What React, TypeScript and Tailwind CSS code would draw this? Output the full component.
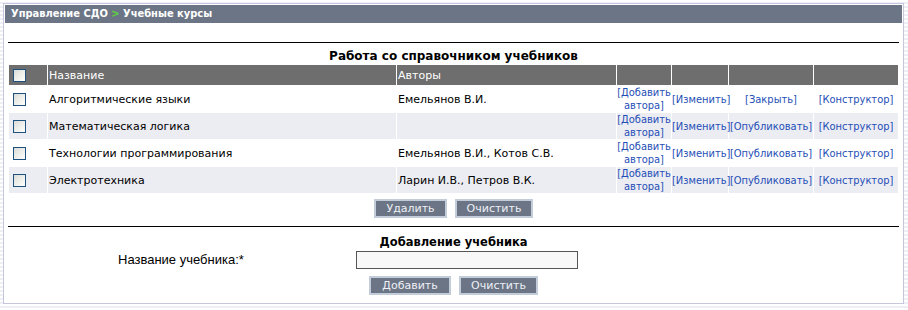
import React from 'react';

type Course = {
  name: string;
  authors: string;
  status: string;
};

const courses: Course[] = [
  { name: 'Алгоритмические языки', authors: 'Емельянов В.И.', status: '[Закрыть]' },
  { name: 'Математическая логика', authors: '', status: '[Опубликовать]' },
  { name: 'Технологии программирования', authors: 'Емельянов В.И., Котов С.В.', status: '[Опубликовать]' },
  { name: 'Электротехника', authors: 'Ларин И.В., Петров В.К.', status: '[Опубликовать]' },
];

const Checkbox: React.FC = () => (
  <span className="block w-[13px] h-[13px] border border-[#1c5180] bg-gradient-to-br from-[#dcdcd6] to-white" />
);

const Button: React.FC<{ label: string; width: string }> = ({ label, width }) => (
  <button
    className={`${width} h-[19px] border-2 border-[#c3ccd9] bg-[#6b7585] text-[#eef0f6] text-[11px] leading-[15px] text-center`}
  >
    {label}
  </button>
);

const Link: React.FC<{ children: React.ReactNode }> = ({ children }) => (
  <a className="text-[#1f4fb6] cursor-pointer font-['DejaVu_Sans_Condensed','Liberation_Sans',sans-serif] text-[11px]">
    {children}
  </a>
);

const App: React.FC = () => {
  return (
    <div className="w-[908px] h-[310px] pt-[3px] pl-[3px] font-['DejaVu_Sans',sans-serif] text-black bg-[repeating-linear-gradient(180deg,#ffffff_0px,#ffffff_2px,#eeeef7_2px,#eeeef7_4px)]">
      <div className="w-[901px] h-[301px] border border-[#c6c6dc] bg-white p-px">
        <div className="h-[18px] bg-[#6b7585] pl-[6px] text-white font-bold text-[11px] leading-[18px] font-['DejaVu_Sans_Condensed','DejaVu_Sans',sans-serif]">
          Управление СДО <span className="text-[#5cd43c]">&gt;</span> Учебные курсы
        </div>

        <div className="px-[3px]">
          <div className="mt-[19px] h-px bg-black" />

          <div className="mt-[7px] text-center font-bold text-[12px] leading-[13px]">
            Работа со справочником учебников
          </div>

          <table className="mt-px w-[891px] table-fixed border-separate border-spacing-px text-[11px] leading-[13px]">
            <thead>
              <tr className="h-[20px] bg-[#6e6e6e] text-white text-left font-normal">
                <th className="w-[38px] pl-[4px] font-normal">
                  <Checkbox />
                </th>
                <th className="w-[348px] pl-px font-normal">Название</th>
                <th className="w-[219px] pl-px font-normal">Авторы</th>
                <th className="w-[54px]" />
                <th className="w-[56px]" />
                <th className="w-[84px]" />
                <th className="w-[84px]" />
              </tr>
            </thead>
            <tbody>
              {courses.map((c, i) => (
                <tr key={c.name} className={`h-[26px] ${i % 2 === 1 ? 'bg-[#ececf3]' : 'bg-white'}`}>
                  <td className="pl-[4px]">
                    <Checkbox />
                  </td>
                  <td className="pl-px">{c.name}</td>
                  <td className="pl-px">{c.authors}</td>
                  <td className="text-center whitespace-nowrap">
                    <Link>
                      [Добавить
                      <br />
                      автора]
                    </Link>
                  </td>
                  <td className="text-center whitespace-nowrap">
                    <Link>[Изменить]</Link>
                  </td>
                  <td className="text-center whitespace-nowrap">
                    <Link>{c.status}</Link>
                  </td>
                  <td className="text-center whitespace-nowrap">
                    <Link>[Конструктор]</Link>
                  </td>
                </tr>
              ))}
            </tbody>
          </table>

          <div className="mt-[5px] flex justify-center gap-[8px]">
            <Button label="Удалить" width="w-[73px]" />
            <Button label="Очистить" width="w-[78px]" />
          </div>

          <div className="mt-[8px] h-px bg-black" />

          <div className="mt-[9px] text-center font-bold text-[11.5px] leading-[13px]">
            Добавление учебника
          </div>

          <div className="mt-[2px] flex items-center h-[18px]">
            <span className="ml-[110px] w-[238px] font-['Liberation_Sans',sans-serif] text-[13px]">
              Название учебника:*
            </span>
            <input className="w-[222px] h-[18px] border border-[#555] bg-[#f8f8f8] outline-none" />
          </div>

          <div className="mt-[7px] flex justify-center gap-[8px]">
            <Button label="Добавить" width="w-[82px]" />
            <Button label="Очистить" width="w-[79px]" />
          </div>
        </div>
      </div>
    </div>
  );
};

export default App;
